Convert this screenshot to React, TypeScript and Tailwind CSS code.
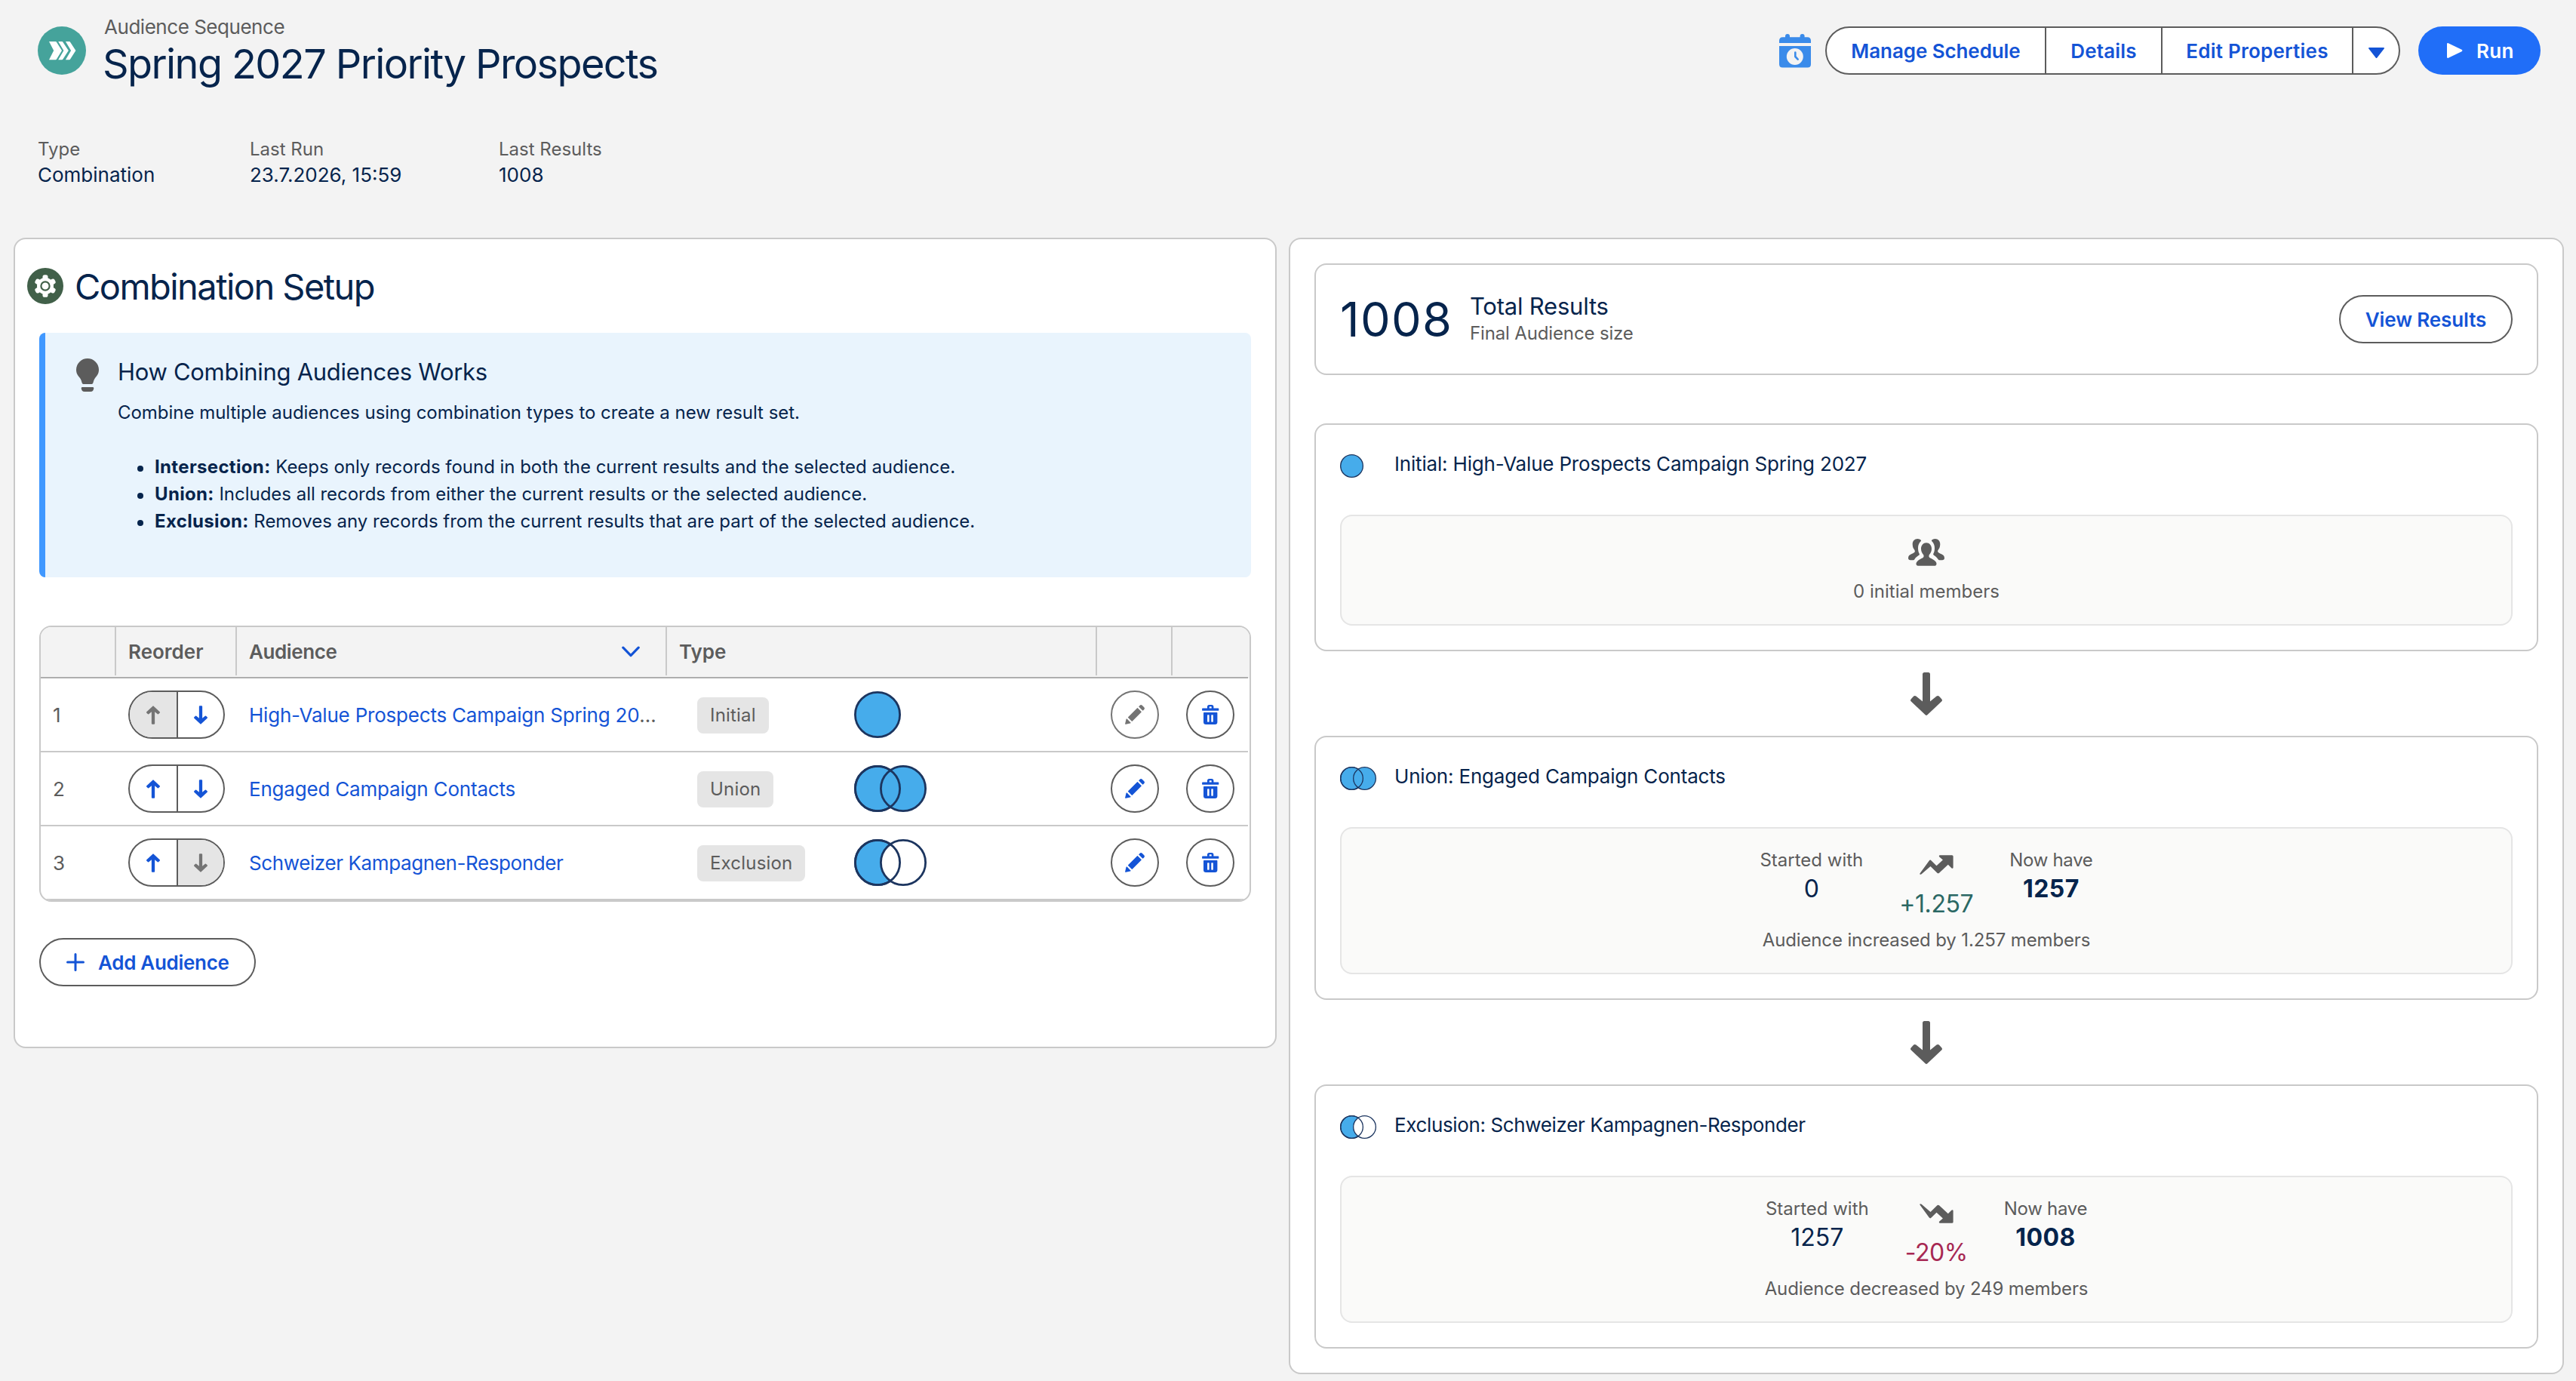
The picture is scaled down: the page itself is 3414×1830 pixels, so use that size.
import { ReactNode } from "react";

type CombinationType = "Initial" | "Union" | "Exclusion";

interface AudienceRow {
  name: string;
  type: CombinationType;
  tracking: string;
}

interface StepResult {
  before: string;
  after: string;
  delta: string;
  direction: "up" | "down";
  summary: string;
}

const audiences: AudienceRow[] = [
  { name: "High-Value Prospects Campaign Spring 2027", type: "Initial", tracking: "tracking-[-0.008em]" },
  { name: "Engaged Campaign Contacts", type: "Union", tracking: "tracking-[-0.0075em]" },
  { name: "Schweizer Kampagnen-Responder", type: "Exclusion", tracking: "tracking-[-0.015em]" },
];

const tableColumns = "grid-cols-[100px_160px_570px_570px_100px_100px]";

function SequenceIcon() {
  return (
    <svg className="mt-[15px] h-16 w-16 shrink-0" viewBox="0 0 64 64">
      <circle cx="32" cy="32" r="32" fill="#45a39b" />
      <g fill="#fff">
        <path d="M15 20h8.600q1 0 1.500 1L32 32l-6.900 11.200q-.5 1-1.500 1H15L21.200 32z" />
        <path d="M27.200 20h5q.8 0 1.300 1L40.800 32l-7.300 11.200q-.5 1-1.300 1h-5L34.400 32z" />
        <path d="M36.900 20h5q.8 0 1.300 1l7.200 11-7.200 11.200q-.5 1-1.300 1h-5L44.100 32z" />
      </g>
    </svg>
  );
}

function GearIcon() {
  return (
    <svg className="h-12 w-12 shrink-0" viewBox="0 0 48 48">
      <circle cx="24" cy="24" r="24" fill="#416049" />
      <g fill="#fff">
        <circle cx="24" cy="24" r="11" />
        <rect x="20.500" y="9.200" width="7" height="29.600" rx="2.600" />
        <rect x="20.500" y="9.200" width="7" height="29.600" rx="2.600" transform="rotate(60 24 24)" />
        <rect x="20.500" y="9.200" width="7" height="29.600" rx="2.600" transform="rotate(120 24 24)" />
      </g>
      <circle cx="24" cy="24" r="5.600" fill="#fff" stroke="#416049" strokeWidth="2.200" />
    </svg>
  );
}

function CalendarIcon() {
  return (
    <svg className="h-[45px] w-[43px]" viewBox="0 0 43 45">
      <g fill="#3a8bea">
        <rect x="8" y="0" width="6" height="10" rx="3" />
        <rect x="27.600" y="0" width="6" height="10" rx="3" />
        <path d="M0 12V9q0-4.700 4.700-4.700h32.600Q42 4.300 42 9v3z" />
        <path d="M0 16h42v24q0 4.500-4.500 4.500h-33Q0 44.500 0 40z" />
      </g>
      <circle cx="20.800" cy="30" r="11" fill="#f3f3f3" />
      <path d="M21.300 24.500V30l3.400 3.600" fill="none" stroke="#3a8bea" strokeWidth="2.600" strokeLinecap="round" strokeLinejoin="round" />
    </svg>
  );
}

function BulbIcon() {
  return (
    <svg className="mt-[2px] h-11 w-[30px]" viewBox="0 0 30 44" fill="#5c5c5c">
      <path d="M15 0a15 15 0 0 1 15 15c0 5-2.500 8-5 11-1.500 2-2 4-2.500 6q-.5 2-2 2h-11q-1.500 0-2-2c-.5-2-1-4-2.500-6-2.500-3-5-6-5-11A15 15 0 0 1 15 0z" />
      <path d="M8 38h14q1.200 0 1.200 1.200 0 4.800-4.200 4.800h-8q-4.200 0-4.200-4.800Q6.800 38 8 38z" />
    </svg>
  );
}

function ArrowIcon({ className }: { className: string }) {
  return (
    <svg className={className} viewBox="0 0 42 57" fill="currentColor">
      <path d="M16 2.500Q16 0 18.500 0h5Q26 0 26 2.500v36l8.600-6.900q1.800-1.400 3.400.2l3.200 3.400q1.600 1.800 0 3.400L22.400 56.200q-1.400 1.400-2.800 0L.8 38.600q-1.600-1.600 0-3.400L4 31.800q1.600-1.600 3.400-.2l8.600 6.900z" />
    </svg>
  );
}

function PencilIcon() {
  return (
    <svg className="h-7 w-7" viewBox="0 0 520 520" fill="currentColor">
      <path d="M95 334l89 89c4 4 10 4 14 0l222-223c4-4 4-10 0-14l-88-88a10 10 0 0 0-14 0L95 321c-4 4-4 10 0 13zM361 57a10 10 0 0 0 0 14l88 88c4 4 10 4 14 0l25-25a38 38 0 0 0 0-55l-47-47a40 40 0 0 0-57 0zM21 482c-2 10 7 19 17 17l109-26c4-1 7-3 9-5l2-2c2-2 3-9-1-13l-90-90c-4-4-11-3-13-1l-2 2a20 20 0 0 0-5 9z" />
    </svg>
  );
}

function TrashIcon() {
  return (
    <svg className="h-7 w-7" viewBox="0 0 28 28" fill="currentColor" fillRule="evenodd">
      <path d="M10 5.400V3.600Q10 1 12.600 1h3.200q2.600 0 2.600 2.600v1.800h6q.9 0 .9.900v1.600q0 .9-.9.900H4q-.9 0-.9-.9V6.300q0-.9.900-.9zm2.700 0h3V3.800q0-.6-.6-.6h-1.800q-.6 0-.6.6z" />
      <path d="M5.800 11h16.800q.8 0 .8.800v12q0 3.200-3.200 3.200h-12Q5 27 5 23.800v-12q0-.8.800-.8zm5 3.300q-.7 0-.7.700v8q0 .7.700.7h1.100q.7 0 .7-.7v-8q0-.7-.7-.7zm5.200 0q-.7 0-.7.700v8q0 .7.700.7h1.100q.7 0 .7-.7v-8q0-.7-.7-.7z" />
    </svg>
  );
}

function PeopleIcon() {
  const side =
    "M12.500 0c1.800 0 3.200.7 4.300 1.800.4.5.3 1.100-.2 1.500C14 5.600 13 9 13 12.500c0 2.800.6 5.200 1.700 7.300.5 1-.2 1.800-1 2.300-2 1.200-4 3-5.400 5.200-.4.6-.9.900-1.600.9H3c-1.800 0-3-1-3-2.800 0-3 1.800-4.300 4.500-5.500 1.600-.7 3.800-1.600 4.200-2.700.5-1.300-.3-2.200-1.200-3.600C6.300 12 5.700 9.500 5.700 7c0-4 2.600-7 6.800-7z";
  return (
    <svg className="h-9 w-12" viewBox="0 0 48 36" fill="#5c5c5c">
      <path d={side} />
      <path d={side} transform="matrix(-1 0 0 1 48 0)" />
      <path d="M24 5.300c4 0 7 3.500 7 8 0 3.500-1.600 6-3 7.700-.8 1-.8 3.200.4 4 .9.600 3 1.300 4.600 2.500 2.600 1.600 4.500 3.500 4.500 5.500s-1.300 2.800-3 2.800h-21c-1.700 0-3-.8-3-2.800s1.900-3.900 4.500-5.500c1.600-1.200 3.700-1.900 4.600-2.500 1.200-.8 1.200-3 .4-4-1.400-1.700-3-4.200-3-7.700 0-4.500 3-8 7-8z" />
    </svg>
  );
}

function TrendIcon({ direction }: { direction: "up" | "down" }) {
  return (
    <svg
      className={direction === "up" ? "h-[26px] w-[45px]" : "h-[26px] w-[45px] -scale-y-100"}
      viewBox="0 0 45 26"
      fill="#5c5c5c"
    >
      <path d="M.4 24.600 12.800 7.400q1.400-1.600 2.800 0l6.900 6.800 8.400-7.600-4.600-4.200q-1.400-2 1-2.100h15.700q1.600 0 1.600 1.500v14.600q-.4 2.400-2.300.8l-4.500-4.500L26 23.800q-1.400 1-2.600 0L14.500 15 2.600 25.300Q.2 26.600.4 24.600z" />
    </svg>
  );
}

function VennIcon({ type, className, stroke }: { type: CombinationType; className: string; stroke: number }) {
  const r = 31 - stroke / 2;
  return (
    <svg className={className} viewBox="0 0 96 62">
      <circle cx="31" cy="31" r={r} fill="#46aceb" stroke="#1c355f" strokeWidth={stroke} />
      {type !== "Initial" && (
        <>
          <circle cx="65" cy="31" r={r} fill={type === "Union" ? "#46aceb" : "#fff"} stroke="#1c355f" strokeWidth={stroke} />
          <circle cx="31" cy="31" r={r} fill="none" stroke="#1c355f" strokeWidth={stroke} />
        </>
      )}
    </svg>
  );
}

function MetaField({ label, value }: { label: string; value: string }) {
  return (
    <div>
      <p className="text-[24px] leading-8 text-[#5c5c5c]">{label}</p>
      <p className="text-[26px] leading-9">{value}</p>
    </div>
  );
}

function PageHeader() {
  return (
    <header className="pl-[50px] pr-[47px] pt-5">
      <div className="flex h-24 justify-between">
        <div className="flex gap-[25px]">
          <SequenceIcon />
          <div className="whitespace-nowrap">
            <p className="-ml-px text-[26px] leading-8 tracking-[-0.018em] text-[#5c5c5c]">Audience Sequence</p>
            <h1 className="-ml-[3px] text-[54px] font-[430] leading-[65px] tracking-[-0.0295em]">Spring 2027 Priority Prospects</h1>
          </div>
        </div>
        <div className="mt-[15px] flex h-16 items-center text-[26px] font-semibold text-[#1454d6]">
          <CalendarIcon />
          <div className="ml-[18px] flex h-16 overflow-hidden rounded-full border-2 border-[#5c5c5c] bg-white">
            <button className="w-[291px] border-r-2 border-[#5c5c5c] tracking-[-0.0034em]">Manage Schedule</button>
            <button className="w-[154px] border-r-2 border-[#5c5c5c] tracking-[0.006em]">Details</button>
            <button className="w-[253px] border-r-2 border-[#5c5c5c] tracking-[0.009em]">Edit Properties</button>
            <button className="flex w-[60px] items-center justify-center">
              <svg className="mt-[5px] h-[14px] w-[21px]" viewBox="0 0 21 14" fill="currentColor">
                <path d="M1 0h19q1.400.2.700 1.500l-9.300 12q-.9 1-1.800 0L.3 1.500Q-.4.200 1 0z" />
              </svg>
            </button>
          </div>
          <button className="ml-6 flex h-16 w-[162px] items-center rounded-full bg-[#206ef8] pl-[38px] text-white">
            <svg className="h-5 w-[21px]" viewBox="0 0 21 20" fill="currentColor">
              <path d="M0 1.200Q.2-.4 1.800.3l17.700 8.500q1.800 1.200 0 2.400L1.800 19.700Q.2 20.400 0 18.800z" />
            </svg>
            <span className="ml-[18px] tracking-[0.01em]">Run</span>
          </button>
        </div>
      </div>
      <div className="mt-[66px] grid grid-cols-[281px_330px_300px]">
        <MetaField label="Type" value="Combination" />
        <MetaField label="Last Run" value="23.7.2026, 15:59" />
        <MetaField label="Last Results" value="1008" />
      </div>
    </header>
  );
}

function Bullet({ term, children }: { term: string; children: ReactNode }) {
  return (
    <li className="flex items-center whitespace-nowrap">
      <span className="mr-[15px] mt-1 h-2 w-2 rounded-full bg-[#06244c]" />
      <span>
        <b className="font-bold tracking-[0.014em]">{term}:</b> {children}
      </span>
    </li>
  );
}

function InfoBox() {
  return (
    <section className="mt-9 flex h-[324px] rounded-lg border-l-8 border-[#4098ff] bg-[#e9f4fd] pl-[41px] pt-8">
      <BulbIcon />
      <div className="ml-[25px]">
        <h3 className="text-[31px] leading-10 tracking-[-0.0096em]">How Combining Audiences Works</h3>
        <p className="mt-4 text-[24px] leading-9 tracking-[-0.001em]">
          Combine multiple audiences using combination types to create a new result set.
        </p>
        <ul className="mt-9 pl-[26px] text-[24px] leading-9 tracking-[-0.001em]">
          <Bullet term="Intersection">Keeps only records found in both the current results and the selected audience.</Bullet>
          <Bullet term="Union">Includes all records from either the current results or the selected audience.</Bullet>
          <Bullet term="Exclusion">Removes any records from the current results that are part of the selected audience.</Bullet>
        </ul>
      </div>
    </section>
  );
}

function HeaderCell({ children, last }: { children?: ReactNode; last?: boolean }) {
  return (
    <div className={last ? "h-16" : "flex h-16 items-center border-r-2 border-[#c9c9c9] pl-4 pr-[34px]"}>{children}</div>
  );
}

function ReorderButtons({ first, last }: { first: boolean; last: boolean }) {
  return (
    <div className="flex h-16 w-32 overflow-hidden rounded-full border-2 border-[#5c5c5c]">
      <button
        className={
          first
            ? "flex w-16 items-center justify-center border-r-2 border-[#5c5c5c] bg-[#e5e5e5] pr-px text-[#747474]"
            : "flex w-16 items-center justify-center border-r-2 border-[#5c5c5c] pr-px text-[#1454d6]"
        }
      >
        <ArrowIcon className="h-[25px] w-[18px] rotate-180" />
      </button>
      <button
        className={
          last
            ? "flex w-[60px] items-center justify-center bg-[#e5e5e5] text-[#747474]"
            : "flex w-[60px] items-center justify-center text-[#1454d6]"
        }
      >
        <ArrowIcon className="h-[25px] w-[18px]" />
      </button>
    </div>
  );
}

function AudienceTable() {
  return (
    <div className="mt-16 overflow-hidden rounded-2xl border-2 border-[#c9c9c9] text-[26px] text-[#5c5c5c]">
      <div className="bg-[#f3f3f3]">
        <div className={`grid h-[68px] w-[1600px] border-b-2 border-[#aeaeae] font-semibold ${tableColumns}`}>
          <HeaderCell />
          <HeaderCell>Reorder</HeaderCell>
          <HeaderCell>
            <span className="flex-1 tracking-[-0.016em]">Audience</span>
            <svg className="h-[15px] w-6" viewBox="0 0 24 15" fill="none" stroke="#1454d6" strokeWidth="3.200" strokeLinecap="round" strokeLinejoin="round">
              <path d="M1.800 2.200 12 12.600 22.200 2.200" />
            </svg>
          </HeaderCell>
          <HeaderCell>Type</HeaderCell>
          <HeaderCell />
          <HeaderCell last />
        </div>
      </div>
      {audiences.map((row, index) => (
        <div key={row.name} className={`grid h-[98px] w-[1600px] items-center border-b-2 border-[#c9c9c9] ${tableColumns}`}>
          <div className="pl-4">{index + 1}</div>
          <div className="pl-4">
            <ReorderButtons first={index === 0} last={index === audiences.length - 1} />
          </div>
          <div className="truncate pl-4 pr-2">
            <a className={`text-[#1454d6] ${row.tracking}`}>{row.name}</a>
          </div>
          <div className="flex items-center pl-10">
            <div className="w-[208px]">
              <span className="mt-[2px] inline-flex h-12 items-center rounded-lg bg-[#e5e5e5] px-[17px] text-[24px] tracking-[0.008em]">
                {row.type}
              </span>
            </div>
            <VennIcon type={row.type} className="h-[62px] w-24" stroke={2.8} />
          </div>
          <div className="pl-[18px]">
            <button
              className={
                index === 0
                  ? "flex h-16 w-16 items-center justify-center rounded-full border-2 border-[#747474] text-[#747474]"
                  : "flex h-16 w-16 items-center justify-center rounded-full border-2 border-[#5c5c5c] text-[#1454d6]"
              }
            >
              <PencilIcon />
            </button>
          </div>
          <div className="pl-[18px]">
            <button className="flex h-16 w-16 items-center justify-center rounded-full border-2 border-[#5c5c5c] text-[#1454d6]">
              <TrashIcon />
            </button>
          </div>
        </div>
      ))}
    </div>
  );
}

function SetupPanel() {
  return (
    <section className="h-[1074px] w-[1674px] rounded-2xl border-2 border-[#c9c9c9] bg-white pt-[38px]">
      <div className="flex pl-4">
        <GearIcon />
        <h2 className="ml-[15px] text-[47px] font-[430] leading-[50px] tracking-[-0.033em]">Combination Setup</h2>
      </div>
      <div className="px-8">
        <InfoBox />
        <AudienceTable />
        <button className="mt-12 flex h-16 w-[287px] items-center rounded-full border-2 border-[#5c5c5c] pl-[34px] text-[26px] font-semibold text-[#1454d6]">
          <svg className="h-6 w-6" viewBox="0 0 24 24" stroke="currentColor" strokeWidth="3" strokeLinecap="round">
            <path d="M12 1.500v21M1.500 12h21" />
          </svg>
          <span className="ml-[18px] tracking-[-0.0116em]">Add Audience</span>
        </button>
      </div>
    </section>
  );
}

function StepCard({ type, title, tall, children }: { type: CombinationType; title: string; tall?: boolean; children: ReactNode }) {
  return (
    <article className="rounded-2xl border-2 border-[#c9c9c9] px-8 pb-8">
      <div className="flex h-[119px] pt-[33px]">
        <VennIcon type={type} className="mt-[6px] h-[31px] w-12" stroke={2.6} />
        <h3
          className={
            type === "Exclusion"
              ? "ml-6 text-[26px] leading-[37px] tracking-[-0.014em]"
              : "ml-6 text-[26px] leading-[37px] tracking-[-0.007em]"
          }
        >
          {title}
        </h3>
      </div>
      <div
        className={
          tall
            ? "flex h-[195px] flex-col items-center rounded-2xl border-2 border-[#e5e5e5] bg-[#fafaf9] pt-[26px]"
            : "flex h-[147px] flex-col items-center rounded-2xl border-2 border-[#e5e5e5] bg-[#fafaf9] pt-[30px]"
        }
      >
        {children}
      </div>
    </article>
  );
}

function StepStats({ result }: { result: StepResult }) {
  return (
    <>
      <div className="flex h-[93px] gap-12 text-center text-[24px] leading-8 text-[#5c5c5c]">
        <div>
          <p>Started with</p>
          <p className="mt-1 text-[32px] leading-9 text-[#06244c]">{result.before}</p>
        </div>
        <div className="flex flex-col items-center pt-[9px]">
          <TrendIcon direction={result.direction} />
          <p
            className={
              result.direction === "up"
                ? "mt-[21px] text-[32px] leading-9 tracking-[-0.013em] text-[#2b6864]"
                : "mt-[21px] text-[32px] leading-9 tracking-[-0.013em] text-[#a72853]"
            }
          >
            {result.delta}
          </p>
        </div>
        <div>
          <p className="tracking-[-0.013em]">Now have</p>
          <p className="mt-1 text-[32px] font-bold leading-9 tracking-[0.012em] text-[#06244c]">{result.after}</p>
        </div>
      </div>
      <p className="mt-[13px] text-[24px] leading-8 tracking-[-0.0055em] text-[#5c5c5c]">{result.summary}</p>
    </>
  );
}

function StepArrow() {
  return (
    <div className="flex h-28 items-center justify-center text-[#5c5c5c]">
      <ArrowIcon className="h-[57px] w-[42px]" />
    </div>
  );
}

function ResultsPanel() {
  return (
    <section className="w-[1690px] rounded-2xl border-2 border-[#c9c9c9] bg-white p-8">
      <div className="mb-16 flex h-[148px] items-center rounded-2xl border-2 border-[#c9c9c9] px-8">
        <p className="w-[172px] pt-px text-[63px] font-[430] tracking-[0.02em]">1008</p>
        <div className="flex-1 pt-[2px]">
          <p className="text-[31px] leading-9 tracking-[-0.007em]">Total Results</p>
          <p className="text-[24px] leading-9 tracking-[-0.006em] text-[#5c5c5c]">Final Audience size</p>
        </div>
        <button className="h-16 w-[230px] rounded-full border-2 border-[#5c5c5c] text-[26px] font-semibold tracking-[-0.004em] text-[#1454d6]">
          View Results
        </button>
      </div>
      <StepCard type="Initial" title="Initial: High-Value Prospects Campaign Spring 2027">
        <PeopleIcon />
        <p className="mt-[18px] text-[24px] leading-8 text-[#5c5c5c]">0 initial members</p>
      </StepCard>
      <StepArrow />
      <StepCard type="Union" title="Union: Engaged Campaign Contacts" tall>
        <StepStats
          result={{ before: "0", after: "1257", delta: "+1.257", direction: "up", summary: "Audience increased by 1.257 members" }}
        />
      </StepCard>
      <StepArrow />
      <StepCard type="Exclusion" title="Exclusion: Schweizer Kampagnen-Responder" tall>
        <StepStats
          result={{ before: "1257", after: "1008", delta: "-20%", direction: "down", summary: "Audience decreased by 249 members" }}
        />
      </StepCard>
    </section>
  );
}

export default function App() {
  return (
    <div className="h-[1830px] w-[3414px] overflow-hidden bg-[#f3f3f3] font-['Inter',sans-serif] text-[#06244c]">
      <PageHeader />
      <main className="mt-[65px] flex items-start gap-4 pl-[18px]">
        <SetupPanel />
        <ResultsPanel />
      </main>
    </div>
  );
}
